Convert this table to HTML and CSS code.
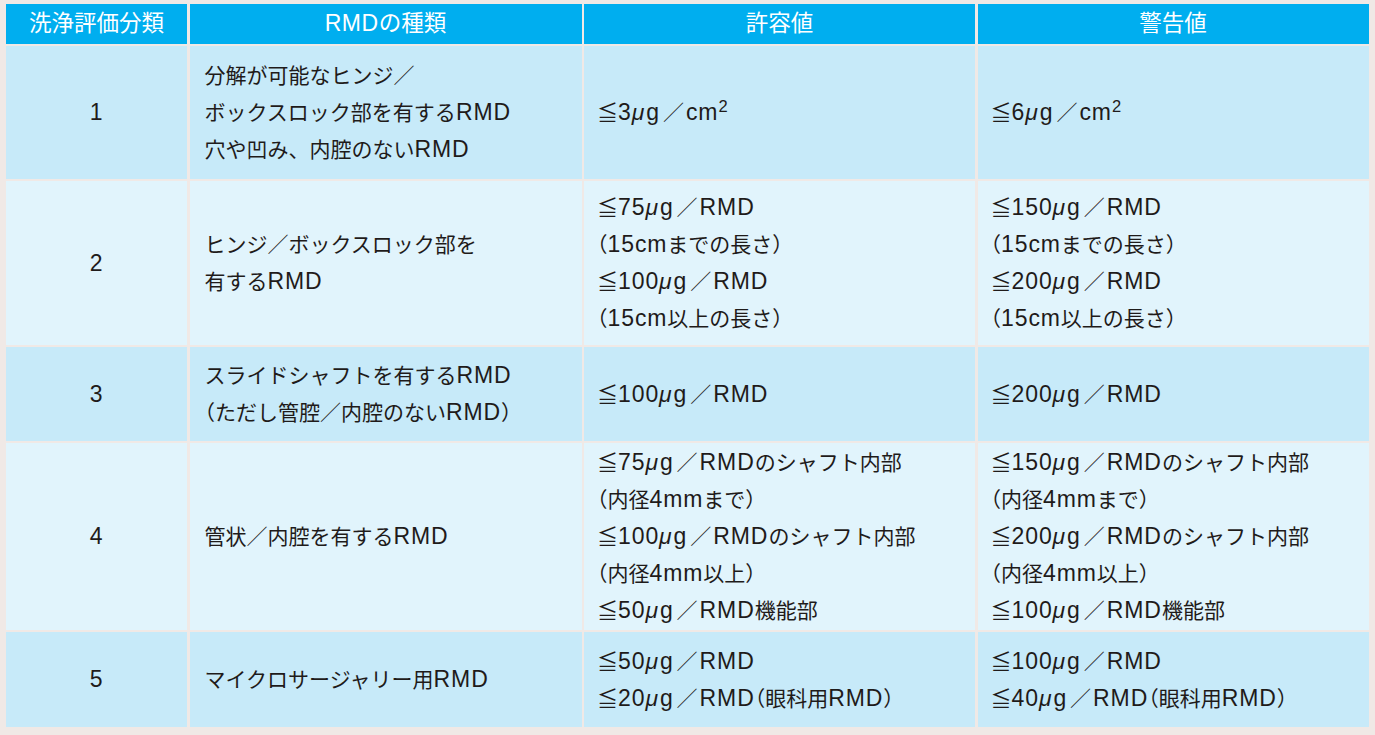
FILE: index.html
```html
<!DOCTYPE html>
<html lang="ja">
<head>
<meta charset="utf-8">
<title>RMD 洗浄評価</title>
<link rel="stylesheet" href="styles.css">
</head>
<body>
<div class="table">
  <div class="cell head"><div>洗浄評価分類</div></div>
  <div class="cell head"><div><span class="e">RMD</span>の種類</div></div>
  <div class="cell head"><div>許容値</div></div>
  <div class="cell head"><div>警告値</div></div>

  <div class="cell dark num"><div><span class="e">1</span></div></div>
  <div class="cell dark kind"><div>分解が可能なヒンジ／<br>ボックスロック部を有する<span class="e">RMD</span><br>穴や凹み、内腔のない<span class="e">RMD</span></div></div>
  <div class="cell dark val"><div>≦<span class="e">3<i>μ</i>g</span><span class="s">／</span><span class="e">cm<sup>2</sup></span></div></div>
  <div class="cell dark val"><div>≦<span class="e">6<i>μ</i>g</span><span class="s">／</span><span class="e">cm<sup>2</sup></span></div></div>

  <div class="cell light num"><div><span class="e">2</span></div></div>
  <div class="cell light kind"><div>ヒンジ／ボックスロック部を<br>有する<span class="e">RMD</span></div></div>
  <div class="cell light val"><div>≦<span class="e">75<i>μ</i>g</span><span class="s">／</span><span class="e">RMD</span><br><span class="p">（</span><span class="e">15cm</span>までの長さ<span class="p">）</span><br>≦<span class="e">100<i>μ</i>g</span><span class="s">／</span><span class="e">RMD</span><br><span class="p">（</span><span class="e">15cm</span>以上の長さ<span class="p">）</span></div></div>
  <div class="cell light val"><div>≦<span class="e">150<i>μ</i>g</span><span class="s">／</span><span class="e">RMD</span><br><span class="p">（</span><span class="e">15cm</span>までの長さ<span class="p">）</span><br>≦<span class="e">200<i>μ</i>g</span><span class="s">／</span><span class="e">RMD</span><br><span class="p">（</span><span class="e">15cm</span>以上の長さ<span class="p">）</span></div></div>

  <div class="cell dark num"><div><span class="e">3</span></div></div>
  <div class="cell dark kind"><div>スライドシャフトを有する<span class="e">RMD</span><br><span class="p">（</span>ただし管腔／内腔のない<span class="e">RMD</span><span class="p">）</span></div></div>
  <div class="cell dark val"><div>≦<span class="e">100<i>μ</i>g</span><span class="s">／</span><span class="e">RMD</span></div></div>
  <div class="cell dark val"><div>≦<span class="e">200<i>μ</i>g</span><span class="s">／</span><span class="e">RMD</span></div></div>

  <div class="cell light num"><div><span class="e">4</span></div></div>
  <div class="cell light kind"><div>管状／内腔を有する<span class="e">RMD</span></div></div>
  <div class="cell light val"><div>≦<span class="e">75<i>μ</i>g</span><span class="s">／</span><span class="e">RMD</span>のシャフト内部<br><span class="p">（</span>内径<span class="e">4mm</span>まで<span class="p">）</span><br>≦<span class="e">100<i>μ</i>g</span><span class="s">／</span><span class="e">RMD</span>のシャフト内部<br><span class="p">（</span>内径<span class="e">4mm</span>以上<span class="p">）</span><br>≦<span class="e">50<i>μ</i>g</span><span class="s">／</span><span class="e">RMD</span>機能部</div></div>
  <div class="cell light val"><div>≦<span class="e">150<i>μ</i>g</span><span class="s">／</span><span class="e">RMD</span>のシャフト内部<br><span class="p">（</span>内径<span class="e">4mm</span>まで<span class="p">）</span><br>≦<span class="e">200<i>μ</i>g</span><span class="s">／</span><span class="e">RMD</span>のシャフト内部<br><span class="p">（</span>内径<span class="e">4mm</span>以上<span class="p">）</span><br>≦<span class="e">100<i>μ</i>g</span><span class="s">／</span><span class="e">RMD</span>機能部</div></div>

  <div class="cell dark num"><div><span class="e">5</span></div></div>
  <div class="cell dark kind"><div>マイクロサージャリー用<span class="e">RMD</span></div></div>
  <div class="cell dark val"><div>≦<span class="e">50<i>μ</i>g</span><span class="s">／</span><span class="e">RMD</span><br>≦<span class="e">20<i>μ</i>g</span><span class="s">／</span><span class="e">RMD</span><span class="p">（</span>眼科用<span class="e">RMD</span><span class="p">）</span></div></div>
  <div class="cell dark val"><div>≦<span class="e">100<i>μ</i>g</span><span class="s">／</span><span class="e">RMD</span><br>≦<span class="e">40<i>μ</i>g</span><span class="s">／</span><span class="e">RMD</span><span class="p">（</span>眼科用<span class="e">RMD</span><span class="p">）</span></div></div>
</div>
</body>
</html>
```

FILE: styles.css
```css
html, body {
  margin: 0;
  padding: 0;
}
body {
  background: #f0e9e6;
  padding: 4px 0 0 6px;
  font-family: "Liberation Sans", "Noto Sans CJK JP", sans-serif;
  color: #1f1b1a;
}
.table {
  display: grid;
  grid-template-columns: 181px 392px 391px 391px;
  grid-template-rows: 40px 133px 164px 94px 187px 95px;
  column-gap: 2.5px;
  row-gap: 2px;
  width: 1362.5px;
}
.cell {
  display: flex;
  align-items: center;
  font-size: 21px;
  line-height: 36px;
  white-space: nowrap;
}
.head {
  background: #00aeef;
  color: #ffffff;
  justify-content: center;
  font-size: 22.5px;
  line-height: 38px;
  padding-bottom: 1px;
}
.head .e {
  font-size: 23px;
  letter-spacing: 0.6px;
}
.dark {
  background: #c7eaf9;
}
.light {
  background: #e1f4fc;
}
.num {
  justify-content: center;
}
.kind {
  padding-left: 15px;
}
.val {
  padding-left: 13px;
}
.e {
  font-size: 23px;
  letter-spacing: 0.9px;
}
.e i {
  font-style: italic;
  margin-right: 1px;
}
.s {
  margin: 0 2px 0 3px;
}
sup {
  font-size: 0.72em;
  line-height: 0;
  vertical-align: 0.5em;
  letter-spacing: 0;
}
.p {
  font-feature-settings: "halt";
}
```
